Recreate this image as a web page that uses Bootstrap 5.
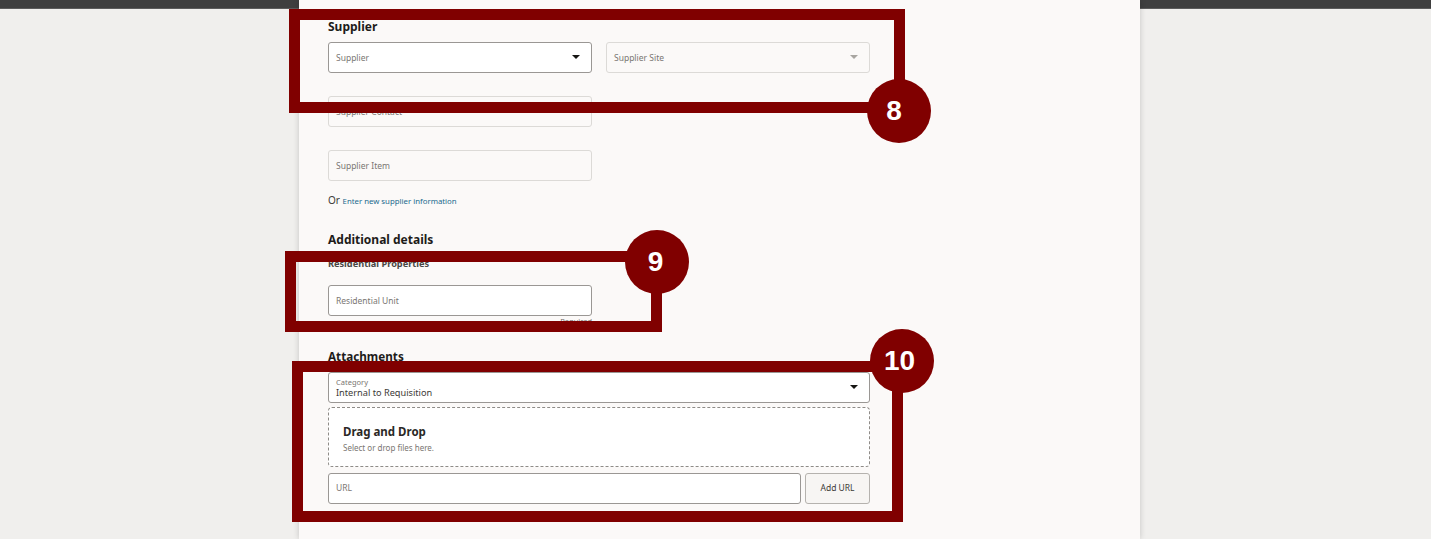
<!DOCTYPE html>
<html lang="en">
<head>
<meta charset="utf-8">
<title>Supplier form</title>
<link rel="stylesheet" href="https://cdn.jsdelivr.net/npm/bootstrap@5.3.0/dist/css/bootstrap.min.css">
<style>
html,body{height:539px;overflow:hidden}
body{background:#f0efed;font-family:"Noto Sans","Open Sans",sans-serif;color:#2b2926;position:relative}
.side-l{width:299px;flex:none}
.side-r{flex:1 1 0}
.bar-top{height:8px;background:#3f3f3f;border-bottom:1px solid #5c5c5c;box-sizing:content-box}
.sheet{width:841px;flex:none;height:539px;background:#fbf9f8;box-shadow:0 0 6px rgba(0,0,0,.18);padding:0 0 0 29px;position:relative;z-index:1}
.form-w{width:542px}
.sec-h{font-size:12px;font-weight:700;line-height:16px;color:#1e1c1a;margin:0}
.sec-sup{padding-top:19px;margin-bottom:7px}
.sec-add{margin-top:24px}
.sec-att{margin-top:22px;margin-bottom:8px;font-size:11.7px}
.sub-h{font-size:9.2px;font-weight:700;line-height:12px;color:#4a4744;margin:10px 0 15px}
.fld{width:264px;height:31px;background:#fbf9f8;border:1px solid #dcdad7;border-radius:3px;padding:1px 7px 0;font-size:8.5px;line-height:1;color:#7a7672}
.fld-gap{margin-top:23px}
.fld-on{background:#fff;border-color:#9a9794}
.fld-url{padding-top:0;padding-bottom:1px}
.fld-wide{width:auto;flex:1 1 0}
.fld-full{width:542px}
.tri{width:0;height:0;border-left:4px solid transparent;border-right:4px solid transparent;border-top:4px solid #161513;margin-right:4px;margin-top:-2px}
.tri-off{border-top-color:#a8a5a1}
.or-line{font-size:10px;line-height:14px;margin-top:12px;color:#3d3a37}
.or-line a{font-size:7.8px;color:#1a6a8e;text-decoration:none}
.req{width:264px;font-size:7.5px;line-height:10px;text-align:right;color:#6f6c68}
.cat-l{font-size:7.5px;line-height:9px;color:#7a7672}
.cat-v{font-size:9.2px;line-height:12px;color:#3d3a37}
.fld-cat{background:#fff;border-color:#9a9794}
.drop{height:60px;width:542px;margin-top:4px;margin-bottom:6px;background:#fff;border:1px dashed #8e8b87;border-radius:4px;padding:2px 14px 0}
.drop-h{font-size:11.5px;font-weight:700;line-height:16px;color:#2b2926}
.drop-s{font-size:8px;line-height:11px;margin-top:2px;color:#7a7672}
.btn-url{width:65px;height:31px;flex:none;padding:0 0 1px;font-size:8.5px;color:#3d3a37;background:#f7f5f3;border:1px solid #b5b2ae;border-radius:3px}
.mark-box{position:absolute;border:11px solid #800000;z-index:2;pointer-events:none}
.mark-num{position:absolute;width:64px;height:64px;border-radius:50%;background:#800000;color:#fff;font:700 28px/64px "Liberation Sans",sans-serif;text-align:center;z-index:3}
.b8{left:289px;top:9px;width:616px;height:104px}
.b9{left:285px;top:251px;width:377px;height:81px}
.b10{left:292px;top:361px;width:611px;height:161px}
.n8{left:867px;top:79px;padding-right:10px}
.n9{left:625px;top:230px;padding-right:3px}
.n10{left:870px;top:329px;padding-right:5px}
</style>
</head>
<body>
<div class="d-flex">
  <div class="side-l"><div class="bar-top"></div></div>
  <main class="sheet">
    <div class="form-w">
      <h2 class="sec-h sec-sup">Supplier</h2>
      <div class="d-flex justify-content-between">
        <div class="fld fld-on d-flex align-items-center justify-content-between"><span>Supplier</span><i class="tri"></i></div>
        <div class="fld d-flex align-items-center justify-content-between"><span>Supplier Site</span><i class="tri tri-off"></i></div>
      </div>
      <div class="fld fld-gap d-flex align-items-center">Supplier Contact</div>
      <div class="fld fld-gap d-flex align-items-center">Supplier Item</div>
      <div class="or-line">Or <a href="#">Enter new supplier information</a></div>
      <h2 class="sec-h sec-add">Additional details</h2>
      <div class="sub-h">Residential Properties</div>
      <div class="fld fld-on d-flex align-items-center">Residential Unit</div>
      <div class="req">Required</div>
      <h2 class="sec-h sec-att">Attachments</h2>
      <div class="fld fld-full fld-cat d-flex align-items-center justify-content-between">
        <div><div class="cat-l">Category</div><div class="cat-v">Internal to Requisition</div></div><i class="tri"></i>
      </div>
      <div class="drop d-flex flex-column justify-content-center">
        <div class="drop-h">Drag and Drop</div>
        <div class="drop-s">Select or drop files here.</div>
      </div>
      <div class="d-flex gap-1">
        <div class="fld fld-on fld-url fld-wide d-flex align-items-center">URL</div>
        <button type="button" class="btn btn-url">Add URL</button>
      </div>
    </div>
  </main>
  <div class="side-r"><div class="bar-top"></div></div>
</div>
<div class="mark-box b8"></div><div class="mark-num n8">8</div>
<div class="mark-box b9"></div><div class="mark-num n9">9</div>
<div class="mark-box b10"></div><div class="mark-num n10">10</div>
</body>
</html>
